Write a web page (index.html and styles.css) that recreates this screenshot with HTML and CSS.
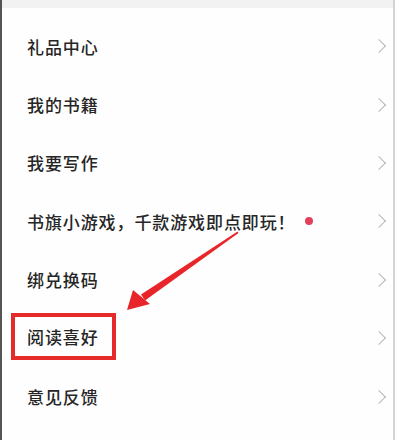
FILE: index.html
```html
<!DOCTYPE html>
<html lang="zh-CN">
<head>
  <meta charset="UTF-8" />
  <meta name="viewport" content="width=device-width, initial-scale=1.0"/>
  <title>设置</title>
  <link rel="stylesheet" href="styles.css">
</head>
<body>

<div class="screen">
  <div class="top-strip"></div>

  <ul class="menu">
    <li class="menu-item"><span class="label">礼品中心</span><span class="chevron"></span></li>
    <li class="menu-item"><span class="label">我的书籍</span><span class="chevron"></span></li>
    <li class="menu-item"><span class="label">我要写作</span><span class="chevron"></span></li>
    <li class="menu-item">
      <span class="label">书旗小游戏，千款游戏即点即玩！</span>
      <span class="dot"></span>
      <span class="chevron"></span>
    </li>
    <li class="menu-item"><span class="label">绑兑换码</span><span class="chevron"></span></li>
    <li class="menu-item highlight"><span class="label">阅读喜好</span><span class="chevron"></span></li>
    <li class="menu-item"><span class="label">意见反馈</span><span class="chevron"></span></li>
  </ul>

  <!-- pointer arrow drawn over the list -->
  <svg class="arrow" width="400" height="440" viewBox="0 0 400 440">
    <polygon points="237.5,231.6 238.5,233 145,300.5 141,294.5" fill="#e8262a"/>
    <polygon points="127,310 133,290 150,304" fill="#e8262a"/>
  </svg>
</div>

</body>
</html>
```

FILE: styles.css
```css
html, body {
  margin: 0;
  padding: 0;
  background: #fff;
}
body {
  font-family: "Noto Sans CJK SC", "Noto Sans", sans-serif;
  color: #262626;
}
.screen {
  position: relative;
  width: 391px;
  height: 440px;
  border-left: 2px solid #555;
  border-right: 2px solid #d4d4d4;
  background: #fefefe;
  overflow: hidden;
}
.top-strip {
  height: 8px;
  background: #f2f2f2;
}
.menu {
  list-style: none;
  margin: 0;
  padding: 9px 0 0 0;
}
.menu-item {
  display: flex;
  align-items: center;
  height: 58.4px;
  padding: 0 9px 0 25px;
}
.label {
  font-size: 17px;
  font-weight: 500;
  letter-spacing: 0.9px;
  white-space: nowrap;
}
.dot {
  width: 8px;
  height: 8px;
  border-radius: 50%;
  background: #e0405a;
  margin-left: 9px;
}
.chevron {
  margin-left: auto;
  width: 9px;
  height: 9px;
  border-top: 1.5px solid #b8b8b8;
  border-right: 1.5px solid #b8b8b8;
  transform: rotate(45deg);
}
.highlight .label {
  outline: 4px solid #e52a2a;
  padding: 7px 13px 7px 12px;
  margin-left: -12px;
  margin-top: -4px;
}
.arrow {
  position: absolute;
  left: -2px;
  top: 0;
  pointer-events: none;
}
```
